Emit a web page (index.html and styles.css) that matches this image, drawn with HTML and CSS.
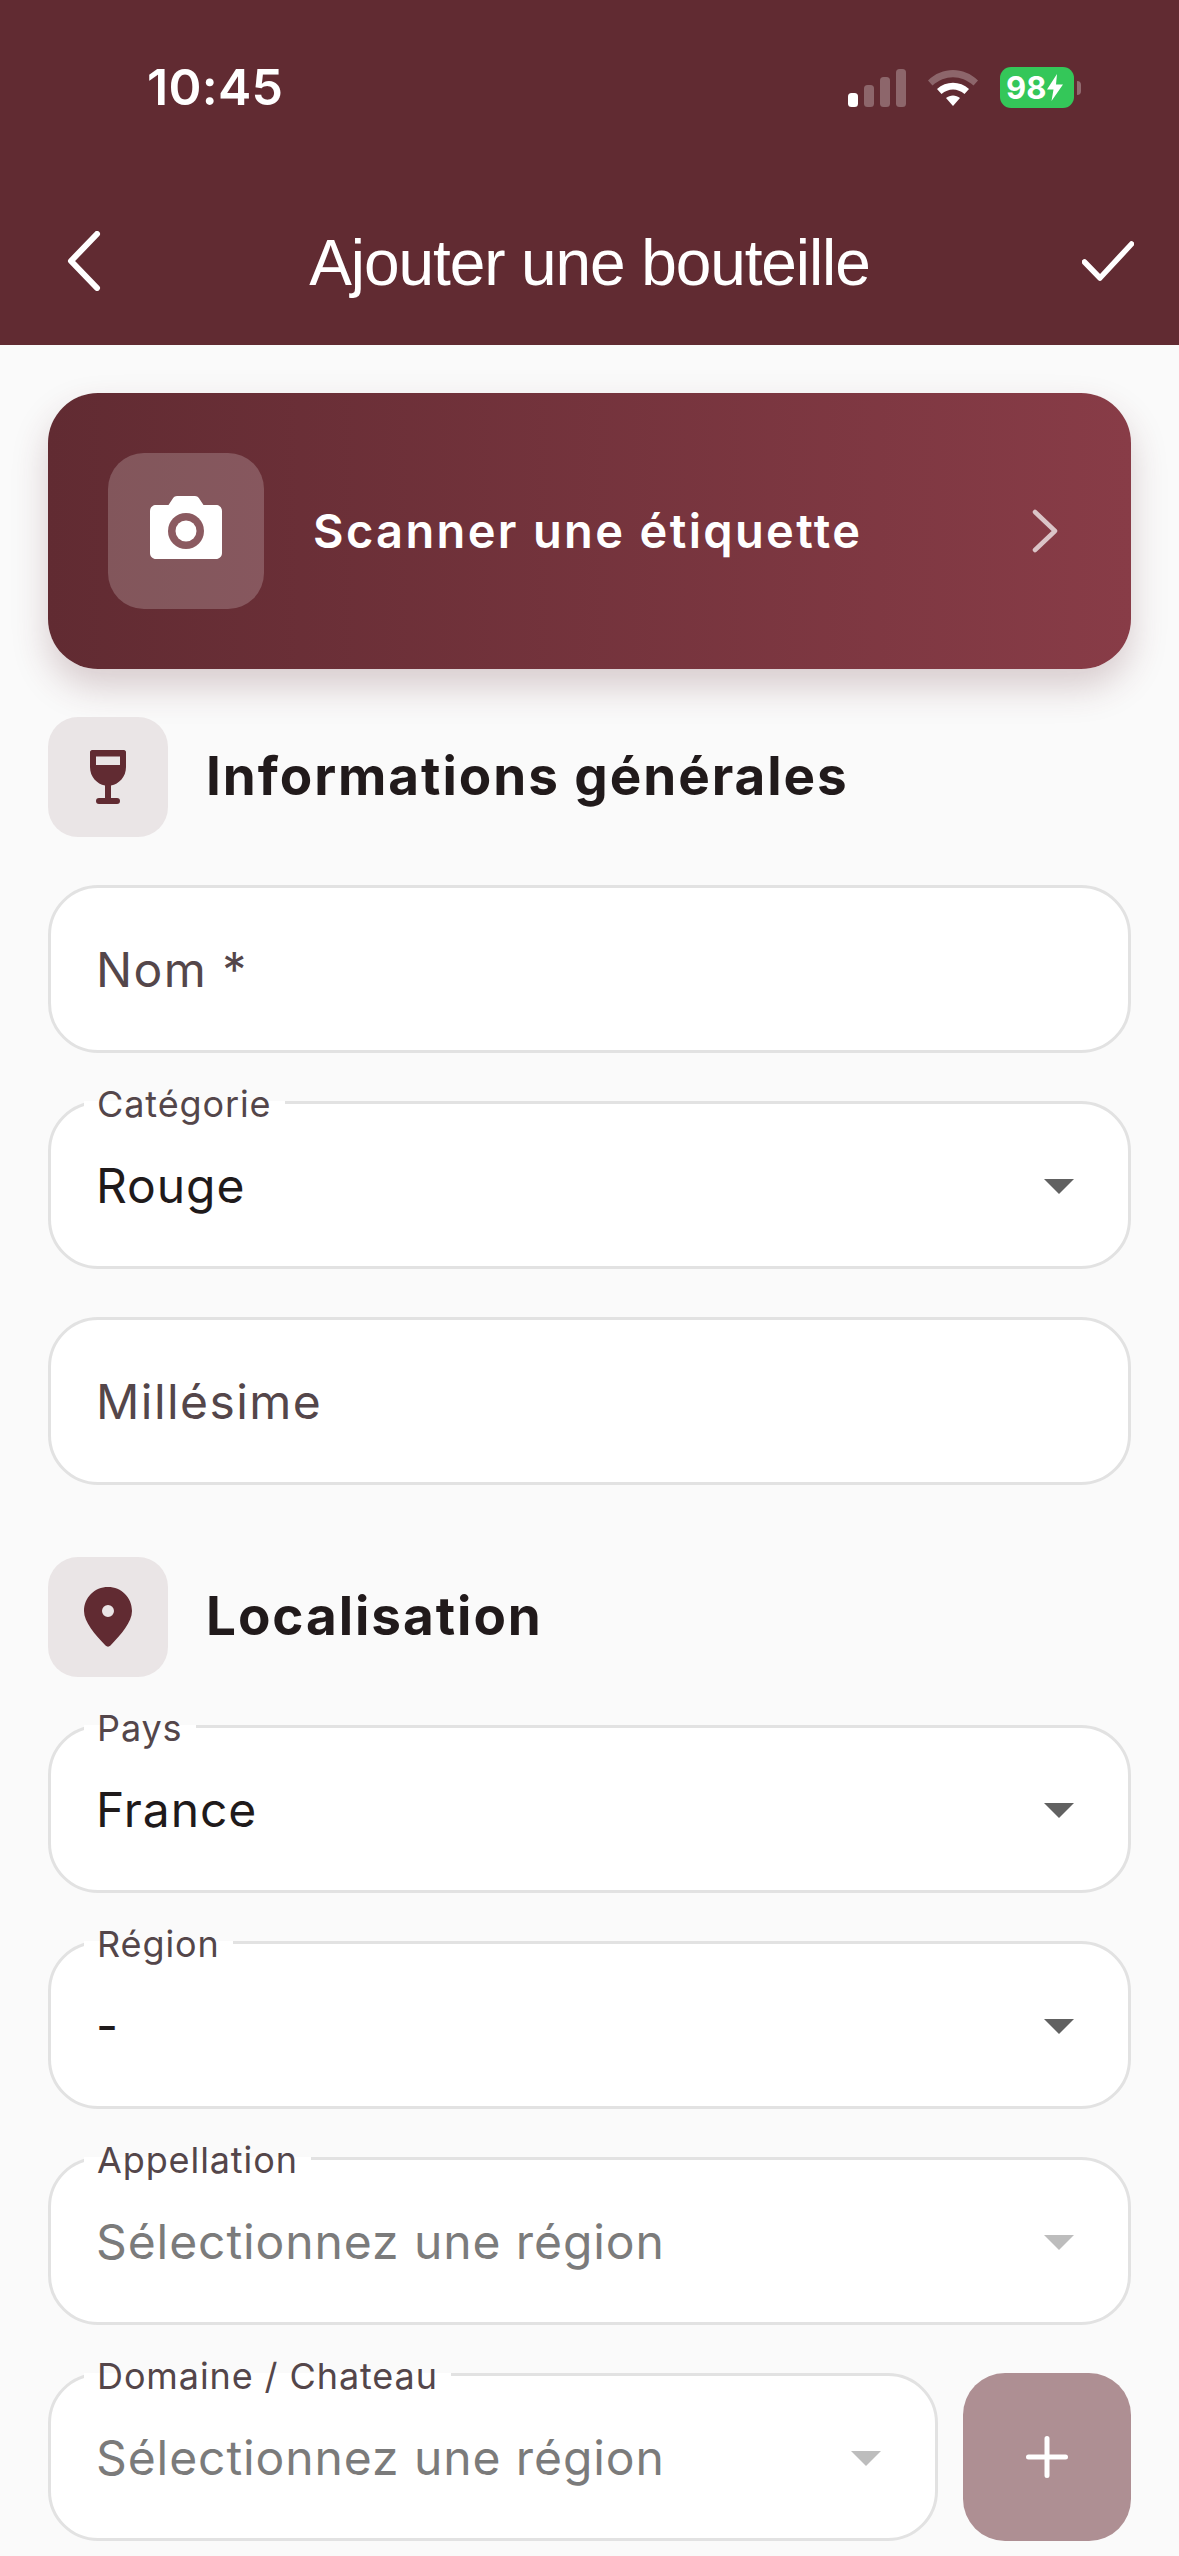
FILE: index.html
```html
<!DOCTYPE html>
<html lang="fr">
<head>
<meta charset="utf-8">
<title>Ajouter une bouteille</title>
<link rel="stylesheet" href="styles.css">
</head>
<body>
<div class="screen">
  <header class="header">
    <div class="status">
      <span class="time">10:45</span>
      <div class="status-icons">
        <svg class="signal" width="58" height="38" viewBox="0 0 58 38"><rect x="0" y="24" width="10" height="14" rx="3.5" fill="#fff"/><rect x="16" y="16" width="10" height="22" rx="3.5" fill="#fff" opacity=".28"/><rect x="32" y="8" width="10" height="30" rx="3.5" fill="#fff" opacity=".28"/><rect x="48" y="0" width="10" height="38" rx="3.5" fill="#fff" opacity=".28"/></svg>
        <svg class="wifi" width="50" height="36" viewBox="0 0 50 36"><path d="M0 10.500C14-3.500 36-3.500 50 10.500L45.500 15.500C33 4.500 17 4.500 4.500 15.500Z" fill="#fff" opacity=".28"/><path d="M9 19C18 10.500 32 10.500 41 19L36.500 24C29.500 18 20.500 18 13.500 24Z" fill="#fff"/><path d="M18 28C22 24.500 28 24.500 32 28L25 36Z" fill="#fff"/></svg>
        <div class="battery"><span class="battery-body"><span class="battery-num">98</span><svg class="bolt" width="16" height="27" viewBox="0 0 16 27"><path d="M10 0L0 15.500H6.500L4.500 27L16 10.500H9Z" fill="#fff"/></svg></span><span class="battery-cap"></span></div>
      </div>
    </div>
    <div class="navbar">
      <svg class="nav-back" width="34" height="60" viewBox="0 0 34 60"><path d="M30 3L4 30L30 57" fill="none" stroke="#fff" stroke-width="6" stroke-linecap="round" stroke-linejoin="round"/></svg>
      <h1 class="title">Ajouter une bouteille</h1>
      <svg class="nav-check" width="52" height="40" viewBox="0 0 52 40"><path d="M2.500 21L18 37L49.500 3" fill="none" stroke="#fff" stroke-width="5.500" stroke-linecap="round" stroke-linejoin="round"/></svg>
    </div>
  </header>

  <main class="content">
    <div class="scan-card">
      <div class="scan-icon">
        <svg class="camera" width="72" height="63" viewBox="0 0 72 63"><path d="M6 9H18.500L23 2.200C24 .8 25.500 0 27 0H45C46.500 0 48 .8 49 2.200L53.500 9H66C69.300 9 72 11.500 72 15V57C72 60.500 69.300 63 66 63H6C2.700 63 0 60.500 0 57V15C0 11.500 2.700 9 6 9Z" fill="#fff"/><circle cx="36" cy="35" r="18" fill="#8b5a60"/><circle cx="36" cy="35" r="10.500" fill="#fff"/></svg>
      </div>
      <span class="scan-label">Scanner une étiquette</span>
      <svg class="scan-arrow" width="26" height="44" viewBox="0 0 26 44"><path d="M3 3L23 22L3 41" fill="none" stroke="#fff" stroke-opacity=".7" stroke-width="4.500" stroke-linecap="round" stroke-linejoin="round"/></svg>
    </div>

    <section class="section section-first">
      <div class="section-head">
        <div class="section-icon">
          <svg width="36" height="54" viewBox="0 0 36 54"><path fill-rule="evenodd" d="M2 0H34C35 0 36 1 36 2V17C36 27 29 34 21 35.500V48H27C29 48 30 49.300 30 51C30 52.700 29 54 27 54H9C7 54 6 52.700 6 51C6 49.300 7 48 9 48H15V35.500C7 34 0 27 0 17V2C0 1 1 0 2 0ZM6 6.500V15H30V6.500Z" fill="#612b32"/></svg>
        </div>
        <h2 class="section-title">Informations générales</h2>
      </div>
      <div class="field"><span class="field-value is-hint">Nom *</span></div>
      <div class="field">
        <span class="float-label">Catégorie</span>
        <span class="field-value">Rouge</span>
        <span class="caret"></span>
      </div>
      <div class="field"><span class="field-value is-hint">Millésime</span></div>
    </section>

    <section class="section section-second">
      <div class="section-head">
        <div class="section-icon">
          <svg width="48" height="60" viewBox="0 0 48 60"><path fill-rule="evenodd" d="M24 0C37.500 0 48 10.500 48 24C48 35 37 47.500 26.500 58.500C25 60 23 60 21.500 58.500C11 47.500 0 35 0 24C0 10.500 10.500 0 24 0ZM24 18A6 6 0 1 0 24 30A6 6 0 1 0 24 18Z" fill="#612b32"/></svg>
        </div>
        <h2 class="section-title">Localisation</h2>
      </div>
      <div class="field">
        <span class="float-label">Pays</span>
        <span class="field-value">France</span>
        <span class="caret"></span>
      </div>
      <div class="field">
        <span class="float-label">Région</span>
        <span class="field-value">-</span>
        <span class="caret"></span>
      </div>
      <div class="field">
        <span class="float-label">Appellation</span>
        <span class="field-value is-disabled">Sélectionnez une région</span>
        <span class="caret caret-disabled"></span>
      </div>
      <div class="field-row">
        <div class="field field-grow">
          <span class="float-label">Domaine / Chateau</span>
          <span class="field-value is-disabled">Sélectionnez une région</span>
          <span class="caret caret-disabled"></span>
        </div>
        <button class="add-btn" type="button" aria-label="Ajouter">
          <svg width="42" height="42" viewBox="0 0 42 42"><path d="M21 2.500V39.500M2.500 21H39.500" fill="none" stroke="#fff" stroke-width="5" stroke-linecap="round"/></svg>
        </button>
      </div>
    </section>
  </main>
</div>
</body>
</html>
```
FILE: styles.css
```css
* { box-sizing: border-box; }
html, body { margin: 0; padding: 0; }
body {
  width: 1179px;
  height: 2556px;
  overflow: hidden;
  background: #fafafa;
  font-family: "Inter", "Roboto", sans-serif;
}
.screen { display: flex; flex-direction: column; height: 2556px; }

.header { background: #612b32; height: 345px; display: flex; flex-direction: column; color: #fff; flex: none; }
.status { height: 211px; padding: 61px 98px 0 147px; display: flex; justify-content: space-between; align-items: flex-start; }
.time { font-weight: 600; font-size: 50px; line-height: 52px; letter-spacing: .3px; }
.status-icons { display: flex; align-items: center; margin-top: 6px; }
.signal { display: block; margin-right: 22px; }
.wifi { display: block; margin-right: 22px; }
.battery { display: flex; align-items: center; }
.battery-body { width: 74px; height: 41px; background: #34c759; border-radius: 11px; display: flex; align-items: center; padding-left: 6px; gap: 1px; }
.battery-num { font-weight: 700; font-size: 31px; line-height: 40px; }
.battery-cap { width: 4px; height: 14px; margin-left: 3px; background: rgba(255,255,255,.3); border-radius: 0 7px 7px 0; }

.navbar { height: 100px; position: relative; display: flex; align-items: center; justify-content: space-between; padding: 0 45px 0 67px; }
.title { position: absolute; left: 0; right: 0; top: 19px; margin: 0; text-align: center; font-family: "Liberation Sans", sans-serif; font-weight: 400; font-size: 64px; line-height: 66px; letter-spacing: -1.100px; color: #fff; }
.nav-back, .nav-check { display: block; position: relative; }

.content { padding: 48px 48px 0; display: flex; flex-direction: column; }

.scan-card {
  height: 276px;
  border-radius: 50px;
  background: linear-gradient(90deg, #612b32 0%, #883c47 100%);
  box-shadow: 0 18px 36px rgba(97,43,50,.22);
  display: flex;
  align-items: center;
  padding: 0 73px 0 60px;
  color: #fff;
  flex: none;
}
.scan-icon { width: 156px; height: 156px; border-radius: 36px; background: rgba(255,255,255,.2); display: flex; align-items: center; justify-content: center; flex: none; }
.camera { display: block; margin-bottom: 7px; }
.scan-label { margin-left: 49px; flex: 1; font-weight: 600; font-size: 47px; letter-spacing: 2.350px; line-height: 56px; }
.scan-arrow { display: block; flex: none; }

.section { display: flex; flex-direction: column; gap: 48px; }
.section-first { margin-top: 48px; }
.section-second { margin-top: 72px; }
.section-head { display: flex; align-items: center; height: 120px; gap: 38px; }
.section-icon { width: 120px; height: 120px; border-radius: 30px; background: #eae5e6; display: flex; align-items: center; justify-content: center; flex: none; }
.section-title { margin: 0 0 2px; font-size: 53px; font-weight: 700; letter-spacing: 1.950px; color: #211a1b; line-height: 60px; }

.field {
  position: relative;
  height: 168px;
  border: 3px solid #e2e2e2;
  border-radius: 50px;
  background: #fff;
  display: flex;
  align-items: center;
  padding: 0 45px;
  flex: none;
}
.field-value { font-size: 48px; line-height: 60px; margin-top: 2px; letter-spacing: .9px; color: #1f1a1b; font-weight: 400; white-space: nowrap; }
.is-hint { color: #54464a; letter-spacing: 1.450px; }
.is-disabled { color: #7b7b7b; letter-spacing: .92px; }
.float-label {
  position: absolute;
  left: 33px;
  top: -20px;
  background: linear-gradient(#fafafa 17px, #fff 17px);
  padding: 0 13px;
  font-size: 36px;
  line-height: 40px;
  letter-spacing: .9px;
  color: #54464a;
  white-space: nowrap;
}
.caret { margin: 3px 9px 0 auto; width: 0; height: 0; border-left: 15px solid transparent; border-right: 15px solid transparent; border-top: 15px solid #616161; flex: none; }
.caret-disabled { border-top-color: #bdbdbd; }
.field-row { display: flex; gap: 25px; align-items: center; }
.field-grow { flex: 1; min-width: 0; }
.add-btn { width: 168px; height: 168px; border: 0; padding: 0; border-radius: 42px; background: #ae8f93; display: flex; align-items: center; justify-content: center; flex: none; }
```
